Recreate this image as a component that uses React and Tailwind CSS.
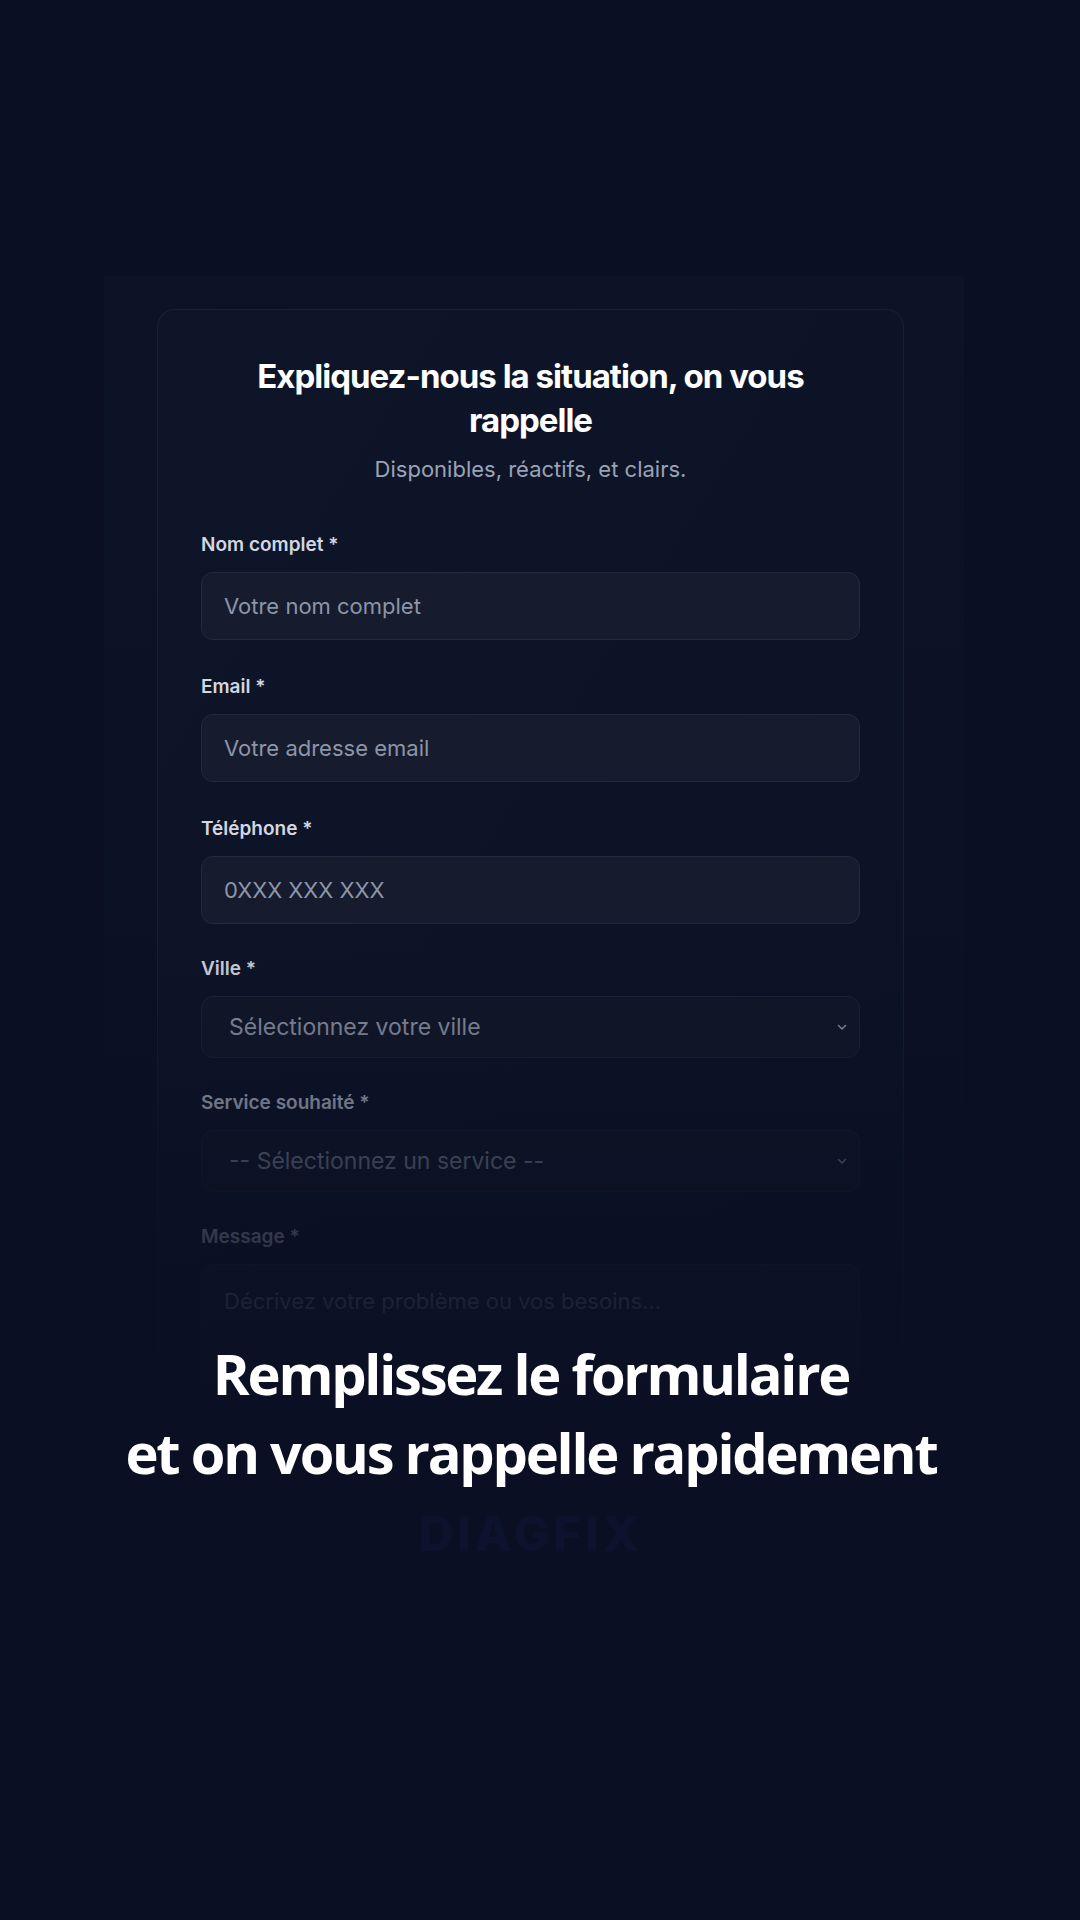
import React from 'react';

const FIELDS = [
  { label: 'Nom complet *', placeholder: 'Votre nom complet', type: 'text' },
  { label: 'Email *', placeholder: 'Votre adresse email', type: 'email' },
  { label: 'Téléphone *', placeholder: '0XXX XXX XXX', type: 'tel' },
];

const SELECTS = [
  { label: 'Ville *', placeholder: 'Sélectionnez votre ville' },
  { label: 'Service souhaité *', placeholder: '-- Sélectionnez un service --' },
];

const Chevron = () => (
  <svg className="pointer-events-none absolute right-[12px] top-1/2 -translate-y-1/2 w-[12px] h-[12px] text-gray-400" viewBox="0 0 12 12" fill="none">
    <path d="M2.5 4.5 6 8l3.5-3.5" stroke="currentColor" strokeWidth="1.6" strokeLinecap="round" strokeLinejoin="round" />
  </svg>
);

export default function App() {
  return (
    <div className="relative min-h-[1920px] w-full overflow-hidden bg-[#0a0f23] font-['Inter',sans-serif]">
      {/* halo derrière la carte */}
      <div className="absolute left-[104px] top-[276px] w-[860px] h-[1100px] bg-gradient-to-b from-[#0f1529] via-[#0d1327] to-transparent opacity-60" />

      <div className="relative pt-[309px] pl-[157px] flex">
        <div className="w-[747px] rounded-[18px] border border-white/[0.05] bg-gradient-to-br from-[#0f1529] to-[#0c1226] px-[43px] pt-[44px] pb-[80px]">
          <h2 className="text-center text-white font-bold text-[33px] leading-[44px] tracking-[-0.03em] px-[40px]">
            Expliquez-nous la situation, on vous rappelle
          </h2>
          <p className="mt-[13px] text-center text-[22px] leading-[28px] text-[#9aa3b5]">
            Disponibles, réactifs, et clairs.
          </p>

          <div className="mt-[50px] flex flex-col gap-[35px]">
            {FIELDS.map((f) => (
              <div key={f.label} className="flex flex-col">
                <label className="text-[19px] leading-[24px] font-semibold text-[#d3d7e0] mb-[15px]">{f.label}</label>
                <input
                  type={f.type}
                  placeholder={f.placeholder}
                  className="h-[68px] w-full rounded-[12px] border border-[#232a3e] bg-[#161c2e] px-[22px] text-[22px] text-white placeholder:text-[#8d95a8] outline-none"
                />
              </div>
            ))}
            {SELECTS.map((s) => (
              <div key={s.label} className="flex flex-col -mt-[2px]">
                <label className="text-[19px] leading-[24px] font-semibold text-[#d3d7e0] mb-[15px]">{s.label}</label>
                <div className="relative">
                  <select className="h-[62px] w-full appearance-none rounded-[12px] border border-[#1e2538] bg-[#121829] pl-[27px] pr-[40px] text-[23px] text-[#9aa2b4] outline-none">
                    <option>{s.placeholder}</option>
                  </select>
                  <Chevron />
                </div>
              </div>
            ))}
            <div className="flex flex-col -mt-[2px]">
              <label className="text-[19px] leading-[24px] font-semibold text-[#d3d7e0] mb-[15px]">Message *</label>
              <textarea
                rows={4}
                placeholder="Décrivez votre problème ou vos besoins..."
                className="h-[150px] w-full resize-none rounded-[12px] border border-[#232a3e] bg-[#161c2e] px-[22px] py-[20px] text-[22px] text-white placeholder:text-[#8d95a8] outline-none"
              />
            </div>
          </div>
        </div>
      </div>

      {/* fondu vers le fond */}
      <div className="absolute left-0 right-0 top-[940px] h-[500px] bg-gradient-to-b from-transparent via-[#0a0f23]/75 to-[#0a0f23]" />
      <div className="absolute left-0 right-0 top-[1440px] bottom-0 bg-[#0a0f23]" />

      {/* accroche */}
      <div className="absolute left-0 right-0 top-[1334px] pr-[18px] flex flex-col items-center">
        <p className="text-center text-white font-['Open_Sans',sans-serif] font-bold text-[56px] leading-[79px] tracking-[-0.04em]">
          Remplissez le formulaire
          <br />
          et on vous rappelle rapidement
        </p>
        <div className="mt-[18px] text-[48px] font-extrabold tracking-[0.08em] text-[#0d132d] font-['Inter',sans-serif] leading-none">
          DIAGFIX
        </div>
      </div>
    </div>
  );
}
